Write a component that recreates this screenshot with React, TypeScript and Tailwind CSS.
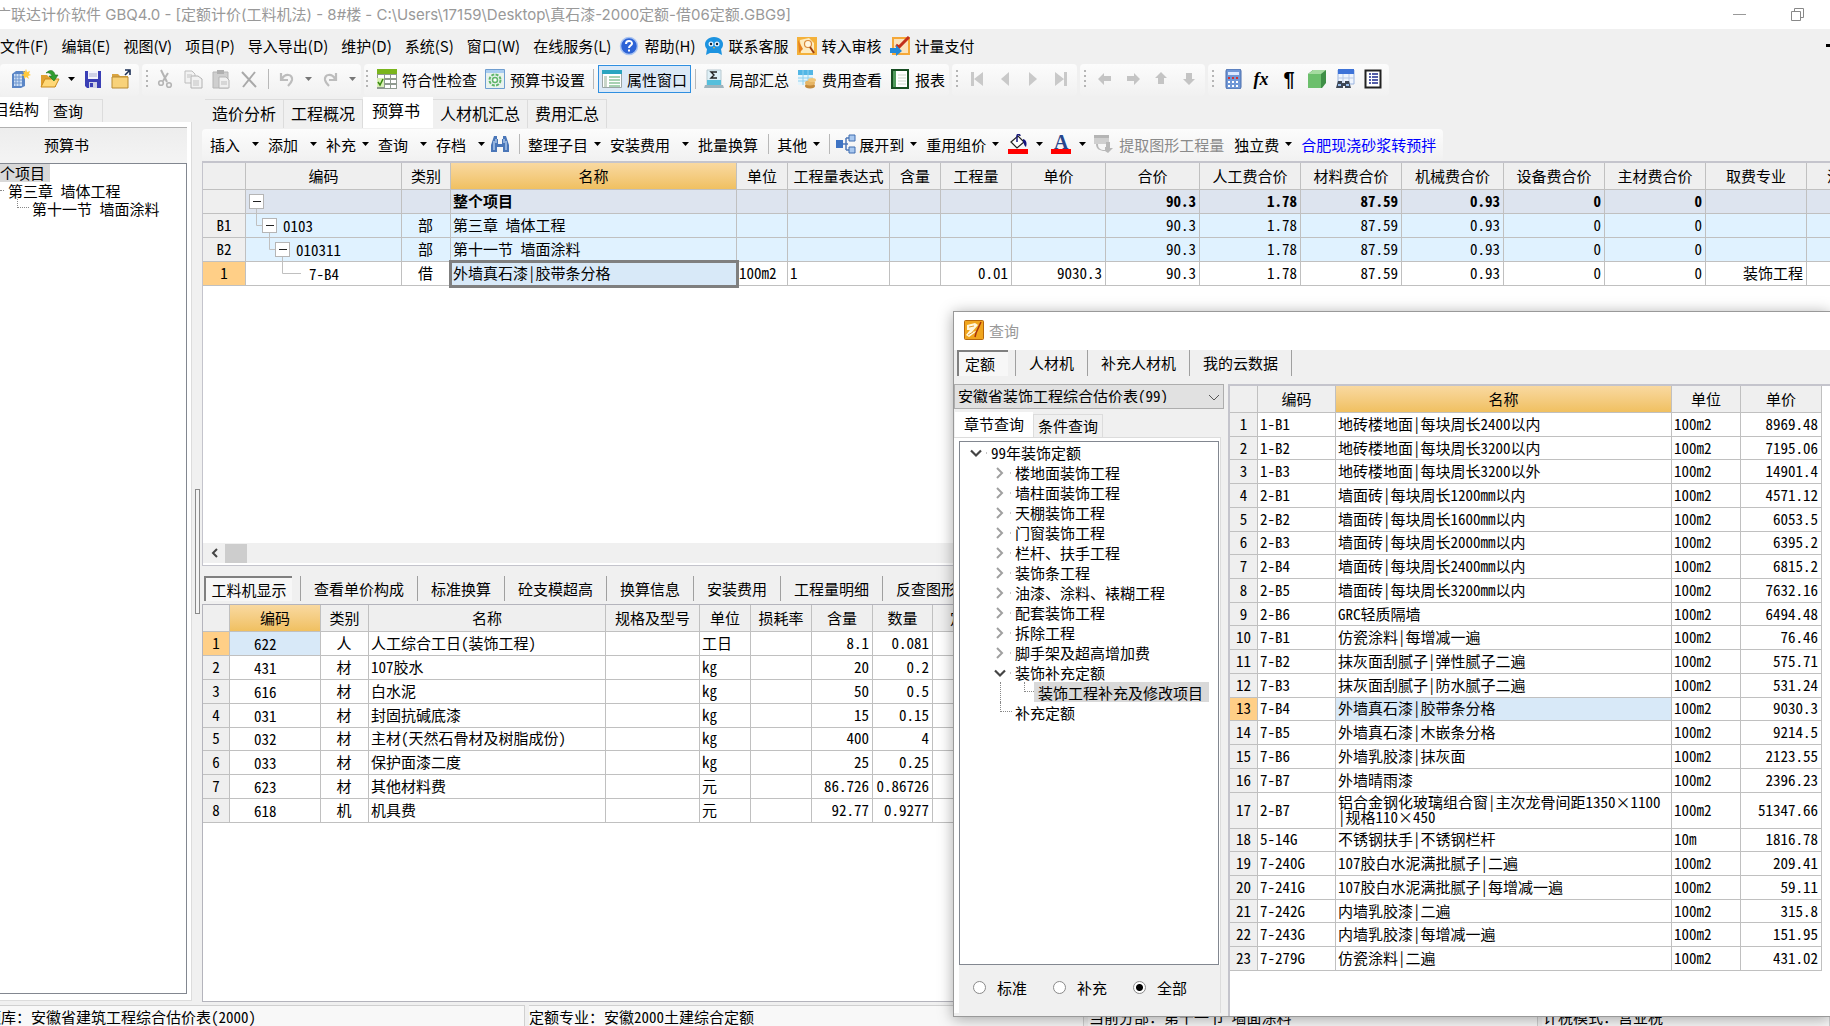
import React, { useState } from 'react';
import clsx from 'clsx';

type IconProps = { children: React.ReactNode; size?: number };

const Svg: React.FC<IconProps> = ({ children, size = 20 }) => (
  <svg width={size} height={size} viewBox="0 0 20 20" fill="none" className="shrink-0" aria-hidden="true">
    {children}
  </svg>
);

const icons = {
  newDoc: (
    <Svg>
      <path d="M1 5l4-3h9v15l-4 2H1z" fill="#5b86c6" />
      <path d="M3 5h8v12H3z" fill="#cfe0f5" />
      <path d="M5 5v12M8 5v12M3 8h8M3 11h8M3 14h8" stroke="#6f97d0" />
      <path d="M15 0l1 3 3-1-1 3 2 1-3 1 1 3-3-2-2 2v-3l-3-1 3-1-1-3 2 1z" fill="#ffc93c" />
    </Svg>
  ),
  open: (
    <Svg>
      <path d="M1 18V6h6l2 2h7v10z" fill="#e0a030" />
      <path d="M1 18l4-8h14l-4 8z" fill="#ffd877" stroke="#c98a1c" />
      <path d="M6 4c4-4 8-3 9 2h3l-4 6-5-5h3c-1-2-3-4-6-3z" fill="#2f9e2f" stroke="#1c6d1c" strokeWidth=".6" />
    </Svg>
  ),
  save: (
    <Svg>
      <path d="M2 2h16v17H4l-2-2z" fill="#3a3fb5" />
      <path d="M5 2h10v8H5z" fill="#f3f4fb" />
      <path d="M6 5h8M6 7h8" stroke="#a9acd0" />
      <path d="M6 13h8v6H6z" fill="#cfd2e6" />
      <path d="M7 14h3v4H7z" fill="#3a3fb5" />
    </Svg>
  ),
  folder: (
    <Svg>
      <path d="M1 5h6l2 2h8v12H1z" fill="#d9a441" />
      <path d="M1 8h16v11H1z" fill="#f8d27a" stroke="#b98a30" />
      <path d="M14 6l4-4M14 1h5v5" stroke="#1b2f55" strokeWidth="1.6" />
    </Svg>
  ),
  cut: (
    <Svg>
      <path d="M6 1l6 12M13 4L8 12" stroke="#b5b5b5" strokeWidth="2" />
      <circle cx="6" cy="14" r="2.3" stroke="#b5b5b5" strokeWidth="1.6" />
      <circle cx="14" cy="16" r="2.3" stroke="#b5b5b5" strokeWidth="1.6" />
    </Svg>
  ),
  copy: (
    <Svg>
      <path d="M2 2h7l3 3v9H2z" fill="#f2f2f2" stroke="#bdbdbd" />
      <path d="M8 7h7l4 3v9H8z" fill="#f2f2f2" stroke="#b2b2b2" />
      <path d="M4 6h5M4 8h3M10 12h6M10 14h6M10 16h6" stroke="#c2c2c2" />
    </Svg>
  ),
  paste: (
    <Svg>
      <path d="M2 3h15v16H2z" fill="#cfcfcf" stroke="#b5b5b5" />
      <path d="M6 1h7v4H6z" fill="#b0b0b0" />
      <path d="M8 8h7l3 3v8H8z" fill="#f0f0f0" stroke="#b5b5b5" />
      <path d="M10 13h6M10 15h6" stroke="#bdbdbd" />
    </Svg>
  ),
  remove: (
    <Svg>
      <path d="M3 3l14 15M16 3L4 18" stroke="#a9a9a9" strokeWidth="2" />
    </Svg>
  ),
  undo: (
    <Svg>
      <path d="M4 4v7h7M5 10c3-6 11-5 10 1-.4 2-2 4-4 6" stroke="#bdbdbd" strokeWidth="2.2" />
    </Svg>
  ),
  redo: (
    <Svg>
      <path d="M16 4v7H9M15 10C12 4 4 5 5 11c.4 2 2 4 4 6" stroke="#bdbdbd" strokeWidth="2.2" />
    </Svg>
  ),
  check: (
    <Svg>
      <path d="M0 0h20v20H0z" fill="#8f9a8f" />
      <path d="M0 0h20v5H0z" fill="#7ab51d" />
      <path d="M1 6h6v4H1zM8 6h5v3H8zM14 6h5v3h-5zM8 11h5v3H8zM14 11h5v3h-5zM8 16h5v3H8zM14 16h5v3h-5z" fill="#fff" />
      <path d="M0 9h7v9H0z" fill="#d8f0b5" />
      <path d="M1 13l2 3 3-6" stroke="#3a8a10" strokeWidth="1.6" />
    </Svg>
  ),
  gear: (
    <Svg>
      <path d="M.5.5h19v19H.5z" fill="#e9f3ee" stroke="#6f9ed0" />
      <path d="M1 1h18v3H1z" fill="#a9cdf0" />
      <circle cx="10" cy="11" r="5.5" stroke="#5fb56a" strokeWidth="2" strokeDasharray="3 1.3" />
      <circle cx="10" cy="11" r="2.5" fill="#fff" stroke="#5fb56a" strokeWidth="1.5" />
    </Svg>
  ),
  windowProps: (
    <Svg>
      <path d="M.5 1.5h19v17H.5z" fill="#fff" stroke="#9aa5a5" />
      <path d="M0 1h20v4H0z" fill="#2aa5c0" />
      <path d="M2 7h3v11H2z" fill="#c9d6c9" />
      <path d="M7 8h11M7 11h11M7 14h11M7 17h11" stroke="#8cc39a" strokeWidth="1.4" />
    </Svg>
  ),
  sum: (
    <Svg>
      <path d="M3 1h14v15H3z" fill="#dff0f7" stroke="#b8c9d0" />
      <path d="M3 11h14v5H3z" fill="#55bfdc" />
      <path d="M1 16h18l1 3H0z" fill="#9fb4bd" />
      <path d="M13 3H7l3 3-3 3h6" stroke="#222" strokeWidth="1.4" />
    </Svg>
  ),
  fee: (
    <Svg>
      <path d="M1 1h15v15H1z" fill="#e5f5fc" />
      <path d="M1 1h15v5H1z" fill="#52b6e5" />
      <path d="M1 9h15M1 12h15M6 1v15M11 1v15" stroke="#8fd0ee" />
      <ellipse cx="13" cy="17" rx="5" ry="2.4" fill="#c48a3a" />
      <ellipse cx="13" cy="14" rx="5" ry="2.4" fill="#e6b565" />
      <ellipse cx="15" cy="11" rx="4" ry="2" fill="#f0c77c" />
    </Svg>
  ),
  report: (
    <Svg>
      <path d="M2 1h16v18H2z" fill="#fff" stroke="#174d22" strokeWidth="2" />
      <path d="M3 2h3v16H3z" fill="#4f9a5b" />
      <path d="M8 6h8M8 9h8M8 12h8M8 15h8" stroke="#cbd8cb" />
    </Svg>
  ),
  first: <Svg><path d="M4 3h3v14H4zM16 3v14L7 10z" fill="#c9c9c9" /></Svg>,
  prev: <Svg><path d="M14 3v14L6 10z" fill="#c9c9c9" /></Svg>,
  next: <Svg><path d="M6 3v14l8-7z" fill="#c9c9c9" /></Svg>,
  last: <Svg><path d="M13 3h3v14h-3zM4 3v14l9-7z" fill="#c9c9c9" /></Svg>,
  left: <Svg><path d="M3 10l6-6v3h7v5H9v4z" fill="#c4c4c4" /></Svg>,
  right: <Svg><path d="M17 10l-6-6v3H4v5h7v4z" fill="#c4c4c4" /></Svg>,
  up: <Svg><path d="M10 3l6 6h-3v6H7V9H4z" fill="#c4c4c4" /></Svg>,
  down: <Svg><path d="M10 16l6-6h-3V4H7v6H4z" fill="#c4c4c4" /></Svg>,
  calc: (
    <Svg>
      <rect x="3" y="0" width="15" height="20" rx="2" fill="#6f97d6" stroke="#4a6cab" />
      <path d="M5 3h11v3H5z" fill="#dbe9ff" />
      <path d="M5 9h2M9 9h2M13 9h2" stroke="#d03030" strokeWidth="2" />
      <path d="M5 13h2M9 13h2M13 13h2M5 17h2M9 17h2M13 17h2" stroke="#fff" strokeWidth="2" />
    </Svg>
  ),
  cube: (
    <Svg>
      <path d="M1 5l5-4h13v13l-4 5H1z" fill="#3f8f46" />
      <path d="M1 5h13v14H1z" fill="#6cbf6c" />
      <path d="M1 5l5-4h13l-5 4z" fill="#a5dba0" />
    </Svg>
  ),
  findTable: (
    <Svg>
      <path d="M3 1h16v14H3z" fill="#eef4fd" stroke="#9bb5e0" />
      <path d="M3 0h16v5H3z" fill="#3e73d8" />
      <path d="M8 5v9M14 5v9M3 9h16" stroke="#b9c9e6" />
      <path d="M3 12h4v2h3v-2h4l2 7h-6v-2H8v2H1z" fill="#3d4654" />
      <path d="M3 16h3M11 16h3" stroke="#9cc0ee" strokeWidth="2" />
    </Svg>
  ),
  list: (
    <Svg>
      <path d="M2.5 1.5h15v17h-15z" fill="#fff" stroke="#222" strokeWidth="2" />
      <path d="M6 5h2M6 8h2M6 11h2M6 14h2M9 5h6M9 8h6M9 11h6M9 14h6" stroke="#1c2a8c" strokeWidth="1.7" />
    </Svg>
  ),
  help: (
    <Svg>
      <circle cx="10" cy="10" r="8.5" fill="#2c63d6" stroke="#a9c4f2" strokeWidth="1.5" />
      <path d="M7 8c0-4 6-4 6-.5 0 2-3 2.2-3 4.5M10 13.500v2" stroke="#fff" strokeWidth="2" />
    </Svg>
  ),
  service: (
    <Svg>
      <path d="M10 1c6 0 9 4 9 7s-1 4-2 5l1 6-4-2H6l-4 2 1-6C2 12 1 11 1 8s3-7 9-7z" fill="#1c93e0" />
      <circle cx="7" cy="8" r="2.500" fill="#e6f5ff" />
      <circle cx="13" cy="8" r="2.500" fill="#e6f5ff" />
      <circle cx="7" cy="8" r="1.200" fill="#123" />
      <circle cx="13" cy="8" r="1.200" fill="#123" />
      <path d="M9 11h2l-1 2z" fill="#f4b13a" />
    </Svg>
  ),
  audit: (
    <Svg>
      <path d="M0 1h20v18H0z" fill="#f4b13a" />
      <path d="M3 4l9-2 5 5v10H4z" fill="#fdebc0" />
      <circle cx="11" cy="8" r="3.500" fill="#fff6e0" stroke="#d98a3a" strokeWidth="1.200" />
      <path d="M13 11l4 6" stroke="#9c3f10" strokeWidth="2" />
      <path d="M1 4l5 9-4 4z" fill="#e5801f" />
    </Svg>
  ),
  payment: (
    <Svg>
      <path d="M2 1h18v18H2z" fill="#f5a838" />
      <path d="M4 3h14v14H4z" fill="#fbe3bc" />
      <path d="M19 1L9 11l-3-2" stroke="#c22f1c" strokeWidth="3" />
      <path d="M0 12h6V9l6 6-6 5v-3H0z" fill="#2389d8" />
    </Svg>
  ),
  binoculars: (
    <Svg>
      <path d="M4 2h3v3h1v5h4V5h1V2h3l3 9v7h-6v-5H7v5H1v-7z" fill="#4a76b8" />
      <path d="M4 7v9M16 7v9M6 5v4M14 5v4" stroke="#b8d2f2" strokeWidth="1.300" />
    </Svg>
  ),
  expand: (
    <Svg>
      <path d="M7 10h5M10 4v12M10 4h4M10 16h4" stroke="#4f78b8" strokeWidth="1.500" />
      <path d="M0 6h7v8H0z" fill="#3f74c4" />
      <path d="M13 1h6v6h-6zM13 13h6v6h-6z" fill="#a9c8ef" stroke="#3f6cb0" />
    </Svg>
  ),
  bucket: (
    <Svg>
      <path d="M3 8l7-6 6 6-7 6z" fill="#fff" stroke="#222" strokeWidth="1.200" />
      <path d="M9 8V2c0-2 3-2 3 0" stroke="#1a1a7a" strokeWidth="1.500" />
      <path d="M15 5c4 1 4 5 3 8-2-1-2-4-3-5z" fill="#16167e" />
      <path d="M0 15h20v5H0z" fill="#f00" />
    </Svg>
  ),
  extract: (
    <Svg>
      <path d="M0 1h15v9H0z" fill="#cfcfcf" />
      <path d="M0 1h15v3H0z" fill="#b5b5b5" />
      <path d="M4 10c0 4 2 6 7 6v-3h1V8h4v6h3l-5 5-3-2c-5 0-9-2-9-7z" fill="#b8b8b8" />
    </Svg>
  ),
  logo: (
    <Svg>
      <rect x=".5" y=".5" width="19" height="19" rx="1" fill="#f0a51e" stroke="#b5670c" />
      <path d="M3 5l8-2 3 2-6 7 5-1-8 6-3-2 4-5H3z" fill="#fff6dc" />
      <path d="M5 7l5-1M4 15l5-3" stroke="#e09a30" />
      <path d="M17 2l-5 11-1 4" stroke="#a8320c" strokeWidth="1.500" />
    </Svg>
  ),
};

const Arrow: React.FC<{ muted?: boolean }> = ({ muted }) => (
  <svg width="7" height="4" viewBox="0 0 7 4" className="shrink-0" aria-hidden="true">
    <path d="M0 0h7L3.500 4z" fill={muted ? '#777' : '#000'} />
  </svg>
);

const Grip = () => (
  <svg width="4" height="20" viewBox="0 0 4 20" className="shrink-0" aria-hidden="true">
    <path d="M1 1h2v2H1zM1 6h2v2H1zM1 11h2v2H1zM1 16h2v2H1z" fill="#b5b5b5" />
  </svg>
);

const Sep = () => <span className="h-5 w-px shrink-0 bg-[#b8b8b8]" />;

const Strip: React.FC<{ children: React.ReactNode; className?: string }> = ({ children, className }) => (
  <div className={clsx('flex h-8 shrink-0 items-center rounded-sm bg-linear-to-b from-[#fcfcfc] to-[#f1f1f1] pb-[2px]', className)}>
    {children}
  </div>
);

const IconButton: React.FC<{ label: string; icon: React.ReactNode; className?: string }> = ({ label, icon, className }) => (
  <button type="button" aria-label={label} className={clsx('flex shrink-0 items-center', className)}>
    {icon}
  </button>
);

const ToolButton: React.FC<{ text: string; icon: React.ReactNode; active?: boolean }> = ({ text, icon, active }) => (
  <button
    type="button"
    className={clsx(
      'flex shrink-0 items-center gap-[5px]',
      active && 'h-7 border border-[#2f8fe0] bg-[#dce9f7] px-[3px]'
    )}
  >
    {icon}
    {text}
  </button>
);

/* split buttons keep their arrow in a wider slot than plain menus */
const MenuButton: React.FC<{ text: string; split?: boolean; icon?: React.ReactNode }> = ({ text, split, icon }) => (
  <button type="button" className="flex shrink-0 items-center pr-[9px]">
    {icon && <span className="mr-[3px]">{icon}</span>}
    <span className={split ? 'mr-3' : 'mr-[6px]'}>{text}</span>
    <Arrow />
  </button>
);

const menus = ['文件(F)', '编辑(E)', '视图(V)', '项目(P)', '导入导出(D)', '维护(D)', '系统(S)', '窗口(W)', '在线服务(L)'];

const mainTabs = ['造价分析', '工程概况', '预算书', '人材机汇总', '费用汇总'];

const budgetHead = [
  '', '编码', '类别', '名称', '单位', '工程量表达式', '含量', '工程量', '单价', '合价',
  '人工费合价', '材料费合价', '机械费合价', '设备费合价', '主材费合价', '取费专业', '汇总类别',
];

const budgetRows = [
  { no: '', level: 0, code: '', kind: '', name: '整个项目', unit: '', expr: '', qty: '', price: '', major: '' },
  { no: 'B1', level: 1, code: '0103', kind: '部', name: '第三章 墙体工程', unit: '', expr: '', qty: '', price: '', major: '' },
  { no: 'B2', level: 2, code: '010311', kind: '部', name: '第十一节 墙面涂料', unit: '', expr: '', qty: '', price: '', major: '' },
  { no: '1', level: 3, code: '7-B4', kind: '借', name: '外墙真石漆|胶带条分格', unit: '100m2', expr: '1', qty: '0.01', price: '9030.3', major: '装饰工程' },
];

const totals = ['90.3', '1.78', '87.59', '0.93', '0', '0'];

const detailTabs = ['查看单价构成', '标准换算', '砼支模超高', '换算信息', '安装费用', '工程量明细', '反查图形工程量'];

const detailHead = ['', '编码', '类别', '名称', '规格及型号', '单位', '损耗率', '含量', '数量', '定额价'];

const detailRows = [
  ['622', '人', '人工综合工日(装饰工程)', '工日', '8.1', '0.081'],
  ['431', '材', '107胶水', 'kg', '20', '0.2'],
  ['616', '材', '白水泥', 'kg', '50', '0.5'],
  ['031', '材', '封固抗碱底漆', 'kg', '15', '0.15'],
  ['032', '材', '主材(天然石骨材及树脂成份)', 'kg', '400', '4'],
  ['033', '材', '保护面漆二度', 'kg', '25', '0.25'],
  ['623', '材', '其他材料费', '元', '86.726', '0.86726'],
  ['618', '机', '机具费', '元', '92.77', '0.9277'],
];

const quotaTree = [
  '楼地面装饰工程', '墙柱面装饰工程', '天棚装饰工程', '门窗装饰工程', '栏杆、扶手工程',
  '装饰条工程', '油漆、涂料、裱糊工程', '配套装饰工程', '拆除工程', '脚手架及超高增加费',
];

const quotaRows = [
  ['1-B1', '地砖楼地面|每块周长2400以内', '100m2', '8969.48'],
  ['1-B2', '地砖楼地面|每块周长3200以内', '100m2', '7195.06'],
  ['1-B3', '地砖楼地面|每块周长3200以外', '100m2', '14901.4'],
  ['2-B1', '墙面砖|每块周长1200mm以内', '100m2', '4571.12'],
  ['2-B2', '墙面砖|每块周长1600mm以内', '100m2', '6053.5'],
  ['2-B3', '墙面砖|每块周长2000mm以内', '100m2', '6395.2'],
  ['2-B4', '墙面砖|每块周长2400mm以内', '100m2', '6815.2'],
  ['2-B5', '墙面砖|每块周长3200mm以内', '100m2', '7632.16'],
  ['2-B6', 'GRC轻质隔墙', '100m2', '6494.48'],
  ['7-B1', '仿瓷涂料|每增减一遍', '100m2', '76.46'],
  ['7-B2', '抹灰面刮腻子|弹性腻子二遍', '100m2', '575.71'],
  ['7-B3', '抹灰面刮腻子|防水腻子二遍', '100m2', '531.24'],
  ['7-B4', '外墙真石漆|胶带条分格', '100m2', '9030.3'],
  ['7-B5', '外墙真石漆|木嵌条分格', '100m2', '9214.5'],
  ['7-B6', '外墙乳胶漆|抹灰面', '100m2', '2123.55'],
  ['7-B7', '外墙晴雨漆', '100m2', '2396.23'],
  ['2-B7', '铝合金钢化玻璃组合窗|主次龙骨间距1350×1100\n|规格110×450', '100m2', '51347.66'],
  ['5-14G', '不锈钢扶手|不锈钢栏杆', '10m', '1816.78'],
  ['7-240G', '107胶白水泥满批腻子|二遍', '100m2', '209.41'],
  ['7-241G', '107胶白水泥满批腻子|每增减一遍', '100m2', '59.11'],
  ['7-242G', '内墙乳胶漆|二遍', '100m2', '315.8'],
  ['7-243G', '内墙乳胶漆|每增减一遍', '100m2', '151.95'],
  ['7-279G', '仿瓷涂料|二遍', '100m2', '431.02'],
];

const Th: React.FC<{ children?: React.ReactNode; hot?: boolean }> = ({ children, hot }) => (
  <th
    scope="col"
    className={clsx(
      'h-[27px] overflow-hidden border-r border-b border-[#c0c0c0] p-0 pb-[2px] font-normal whitespace-nowrap',
      hot ? 'bg-linear-to-b from-[#f9d9a0] to-[#f0c060]' : 'bg-[#efefef]'
    )}
  >
    {children}
  </th>
);

const cell = 'border-r border-b border-[#c0c0c0] pt-0 pr-[3px] pb-[2px] pl-[2px]';
const rowHead = 'border-r border-b border-[#c0c0c0] p-0 pb-[2px] text-center font-normal';

/* connector lines and the collapse box of one row in the code column */
const CodeCell: React.FC<{ level: number; code: string }> = ({ level, code }) => {
  const x = 10 + level * 13;
  const px = x - 13;
  return (
    <div className="flex h-[23px] items-center">
      <svg width={x + 14} height="23" className="shrink-0" aria-hidden="true" fill="none">
        {level > 0 && <path d={`M${px}.5 0V11.500H${level === 3 ? x + 6 : x}`} stroke="#c0c0c0" />}
        {level < 3 && (
          <>
            <path d={`M${x}.5 18V23`} stroke="#c0c0c0" />
            <rect x={x - 6.500} y="4.500" width="14" height="14" fill="#fff" stroke="#b5b5b5" />
            <path d={`M${x - 3} 11.500h8`} stroke="#222" />
          </>
        )}
      </svg>
      <span>{code}</span>
    </div>
  );
};

const Twist: React.FC<{ open?: boolean }> = ({ open }) => (
  <svg width="21" height="20" viewBox="0 0 21 20" fill="none" className="shrink-0" aria-hidden="true">
    {open ? (
      <path d="M1 8.500l5 5 5-5" stroke="#444" strokeWidth="2.200" />
    ) : (
      <path d="M3 6l5 5-5 5" stroke="#a0a0a0" strokeWidth="2" />
    )}
    <path d="M16 11h1" stroke="#888" />
  </svg>
);

export default function App() {
  const [tab, setTab] = useState('预算书');
  const [scope, setScope] = useState('全部');

  return (
    <div className="relative flex h-screen w-full flex-col overflow-hidden bg-[#f0f0f0] font-['Noto_Sans_Mono_CJK_SC','Noto_Sans_CJK_SC',sans-serif] text-[15px] leading-[15px] whitespace-nowrap text-black">
      {/* title bar */}
      <header className="flex h-[29px] shrink-0 items-center justify-between bg-white font-['Inter','Noto_Sans_CJK_SC',sans-serif] text-[#999]">
        <h1 className="-ml-1">广联达计价软件 GBQ4.0 - [定额计价(工料机法) - 8#楼 - C:\Users\17159\Desktop\真石漆-2000定额-借06定额.GBG9]</h1>
        <div className="flex items-center gap-[45px] pr-[26px]">
          <IconButton
            label="最小化"
            icon={<svg width="13" height="13" fill="none"><path d="M0 6.500h13" stroke="#999" /></svg>}
          />
          <IconButton
            label="还原"
            icon={<svg width="13" height="13" fill="none"><path d="M.5 3.500h9v9h-9zM3.500 3V.5h9v9H10" stroke="#888" /></svg>}
          />
        </div>
      </header>

      {/* menu bar */}
      <nav className="flex h-[35px] shrink-0 items-center pb-[2px] font-['Noto_Sans_CJK_SC',sans-serif]">
        <div className="flex gap-[13px]">
          {menus.map((m) => <button type="button" key={m}>{m}</button>)}
        </div>
        <div className="ml-2 flex gap-2">
          <ToolButton icon={icons.help} text="帮助(H)" />
          <ToolButton icon={icons.service} text="联系客服" />
          <ToolButton icon={icons.audit} text="转入审核" />
          <ToolButton icon={icons.payment} text="计量支付" />
        </div>
        <span className="ml-auto h-[3px] w-1 bg-black" />
      </nav>

      {/* main toolbar */}
      <div className="flex h-[33px] shrink-0 gap-[3px] font-['Noto_Sans_CJK_SC',sans-serif]">
        <Strip className="w-[139px] pl-[11px]">
          <IconButton label="新建" icon={icons.newDoc} />
          <IconButton label="打开" icon={icons.open} className="ml-[9px]" />
          <IconButton label="最近文件" icon={<Arrow />} className="ml-2" />
          <IconButton label="保存" icon={icons.save} className="ml-2" />
          <IconButton label="目录" icon={icons.folder} className="ml-2" />
        </Strip>
        <Strip className="w-[219px] pl-[3px]">
          <Grip />
          <IconButton label="剪切" icon={icons.cut} className="ml-[6px]" />
          <IconButton label="复制" icon={icons.copy} className="ml-2" />
          <IconButton label="粘贴" icon={icons.paste} className="ml-2" />
          <IconButton label="删除" icon={icons.remove} className="mr-[9px] ml-2" />
          <Sep />
          <IconButton label="撤消" icon={icons.undo} className="ml-2" />
          <IconButton label="撤消列表" icon={<Arrow muted />} className="ml-2" />
          <IconButton label="恢复" icon={icons.redo} className="ml-2" />
          <IconButton label="恢复列表" icon={<Arrow muted />} className="ml-[9px]" />
        </Strip>
        <Strip className="gap-2 pr-1 pl-px">
          <Grip />
          <ToolButton icon={icons.check} text="符合性检查" />
          <ToolButton icon={icons.gear} text="预算书设置" />
          <Sep />
          <div className="-mx-1"><ToolButton icon={icons.windowProps} text="属性窗口" active /></div>
          <Sep />
          <ToolButton icon={icons.sum} text="局部汇总" />
          <ToolButton icon={icons.fee} text="费用查看" />
          <ToolButton icon={icons.report} text="报表" />
        </Strip>
        <Strip className="w-[125px] gap-2 pl-[3px]">
          <Grip />
          <IconButton label="首行" icon={icons.first} />
          <IconButton label="上一行" icon={icons.prev} />
          <IconButton label="下一行" icon={icons.next} />
          <IconButton label="末行" icon={icons.last} />
        </Strip>
        <Strip className="w-[125px] gap-2 pl-[3px]">
          <Grip />
          <IconButton label="升级" icon={icons.left} />
          <IconButton label="降级" icon={icons.right} />
          <IconButton label="上移" icon={icons.up} />
          <IconButton label="下移" icon={icons.down} />
        </Strip>
        <Strip className="gap-2 pr-[6px] pl-[3px]">
          <Grip />
          <IconButton label="计算器" icon={icons.calc} />
          <button type="button" className="w-5 font-['Liberation_Serif',serif] text-lg font-bold italic">fx</button>
          <button type="button" className="w-5 font-['Liberation_Sans',sans-serif] text-xl font-bold">¶</button>
          <IconButton label="图元" icon={icons.cube} />
          <IconButton label="查找" icon={icons.findTable} />
          <IconButton label="清单" icon={icons.list} />
        </Strip>
      </div>

      <div className="flex min-h-0 flex-1">
        {/* project structure */}
        <aside className="flex w-[192px] shrink-0 flex-col pb-1">
          <div className="flex h-[25px] items-end font-['Noto_Sans_CJK_SC',sans-serif]">
            <button type="button" className="flex h-[25px] w-12 items-center justify-end bg-white pr-[9px] pb-[2px]">项目结构</button>
            <button type="button" className="h-[23px] w-[55px] border border-b-0 border-[#dcdcdc] pr-[19px] pb-[2px] pl-1">查询</button>
          </div>
          <div className="flex min-h-0 flex-1 flex-col border-r border-b border-[#dcdcdc] bg-white pt-[5px] pr-1 pb-[6px]">
            <div className="flex h-9 shrink-0 items-center justify-center border-t border-[#b0b0b0] bg-linear-to-b from-[#ededed] to-[#f4f4f4] pr-[54px] pb-[2px] font-['Noto_Sans_CJK_SC',sans-serif]">
              预算书
            </div>
            <ul className="flex-1 border-y border-r border-[#828790]">
              <li className="flex h-[18px] w-[50px] items-center justify-end bg-[#d9d9d9] pr-[5px] pb-[2px]">整个项目</li>
              <li className="flex h-[18px] items-center gap-1 pb-[2px]">
                <span className="w-1 border-b border-dotted border-[#888]" />
                第三章 墙体工程
              </li>
              <li className="flex h-[18px] items-center gap-[3px] pb-[2px] pl-[17px]">
                <span className="-mt-[9px] h-[9px] w-3 border-b border-l border-dotted border-[#888]" />
                第十一节 墙面涂料
              </li>
            </ul>
          </div>
        </aside>

        <div className="flex w-[10px] shrink-0 items-center justify-end pr-[2px]">
          <span className="h-[125px] w-[5px] border border-[#8a8a8a] bg-[#f4f4f4]" />
        </div>

        <main className="flex min-w-0 flex-1 flex-col pb-[3px]">
          <div className="flex h-8 shrink-0 items-end text-base">
            <div className="flex items-end pb-px pl-[3px]">
              {mainTabs.map((t) => (
                <button
                  type="button"
                  key={t}
                  onClick={() => setTab(t)}
                  className={clsx(
                    t === tab
                      ? 'h-[31px] bg-white pr-[13px] pb-[6px] pl-[9px]'
                      : 'h-[29px] border-t border-r border-[#dcdcdc] px-[7px] pb-[2px]'
                  )}
                >
                  {t}
                </button>
              ))}
            </div>
          </div>

          <div className="flex h-8 shrink-0 font-['Noto_Sans_CJK_SC',sans-serif]">
            <Strip className="pr-[7px] pl-2">
              <MenuButton text="插入" split />
              <MenuButton text="添加" split />
              <MenuButton text="补充" />
              <MenuButton text="查询" split />
              <MenuButton text="存档" split />
              <IconButton label="查找" icon={icons.binoculars} className="-ml-1 mr-[9px]" />
              <Sep />
              <span className="w-2" />
              <MenuButton text="整理子目" />
              <MenuButton text="安装费用" split />
              <button type="button" className="mr-[10px]">批量换算</button>
              <Sep />
              <span className="w-2" />
              <MenuButton text="其他" />
              <Sep />
              <span className="w-[6px]" />
              <MenuButton text="展开到" icon={icons.expand} />
              <MenuButton text="重用组价" />
              <IconButton label="填充颜色" icon={icons.bucket} />
              <IconButton label="填充颜色列表" icon={<Arrow />} className="mx-2" />
              <button
                type="button"
                className="h-5 w-5 border-b-[5px] border-[#f00] font-['Liberation_Serif',serif] text-xl leading-[14px] font-bold text-[#28458c]"
              >
                A
              </button>
              <IconButton label="文字颜色列表" icon={<Arrow />} className="mx-2" />
              <button type="button" disabled className="mr-[10px] flex items-center gap-[5px] text-[#8a8a8a]">
                {icons.extract}
                提取图形工程量
              </button>
              <MenuButton text="独立费" />
              <a href="#mortar" className="text-[#0000ff]">合肥现浇砂浆转预拌</a>
            </Strip>
          </div>

          {/* budget sheet */}
          <section className="flex shrink-0 basis-[405px] flex-col border-t-2 border-b border-l border-[#c4c4cc] bg-white">
            <div className="min-h-0 flex-1 overflow-hidden">
              <table className="h-[122px] w-[1705px] table-fixed border-separate border-spacing-0">
                <colgroup>
                  <col className="w-[43px]" />
                  <col className="w-[156px]" />
                  <col className="w-[49px]" />
                  <col className="w-[286px]" />
                  <col className="w-[51px]" />
                  <col className="w-[102px]" />
                  <col className="w-[51px]" />
                  <col className="w-[71px]" />
                  <col className="w-[94px]" />
                  <col className="w-[94px]" />
                  <col className="w-[101px]" />
                  <col className="w-[101px]" />
                  <col className="w-[102px]" />
                  <col className="w-[101px]" />
                  <col className="w-[101px]" />
                  <col className="w-[101px]" />
                  <col className="w-[101px]" />
                </colgroup>
                <thead>
                  <tr>
                    {budgetHead.map((h, i) => <Th key={i} hot={h === '名称'}>{h}</Th>)}
                  </tr>
                </thead>
                <tbody>
                  {budgetRows.map((r) => {
                    const leaf = r.level === 3;
                    return (
                      <tr
                        key={r.level}
                        className={clsx(r.level === 0 && 'bg-[#dde4ef] font-bold', !leaf && r.level > 0 && 'bg-[#e0f2ff]')}
                      >
                        <th scope="row" className={clsx(rowHead, leaf ? 'bg-[#ffcf87]' : 'bg-[#efefef]')}>{r.no}</th>
                        <td className="border-r border-b border-[#c0c0c0] p-0"><CodeCell level={r.level} code={r.code} /></td>
                        <td className={clsx(cell, 'text-center')}>{r.kind}</td>
                        <td className={clsx(cell, leaf && 'bg-[#d8e9f8] outline-3 -outline-offset-1 outline-[#7f7f7f]')}>{r.name}</td>
                        <td className={cell}>{r.unit}</td>
                        <td className={cell}>{r.expr}</td>
                        <td className={cell} />
                        <td className={clsx(cell, 'text-right')}>{r.qty}</td>
                        <td className={clsx(cell, 'text-right')}>{r.price}</td>
                        {totals.map((v, i) => <td key={i} className={clsx(cell, 'text-right')}>{v}</td>)}
                        <td className={clsx(cell, 'text-right')}>{r.major}</td>
                        <td className={cell} />
                      </tr>
                    );
                  })}
                </tbody>
              </table>
            </div>
            <div className="mb-[2px] flex h-5 shrink-0 items-center bg-[#f0f0f0] pl-2">
              <svg width="7" height="10" fill="none" aria-hidden="true"><path d="M6 1L2 5l4 4" stroke="#444" strokeWidth="2" /></svg>
              <span className="ml-[7px] h-[19px] w-[22px] bg-[#cdcdcd]" />
            </div>
          </section>

          <div className="flex h-[38px] shrink-0 items-end overflow-hidden pb-[3px] pl-[2px]">
            <button type="button" className="mr-2 h-[25px] w-[88px] shrink-0 border-t-2 border-l-2 border-[#808080] bg-[#f7f7f7] pb-px">
              工料机显示
            </button>
            {detailTabs.map((t) => (
              <button type="button" key={t} className="h-[25px] shrink-0 border-l border-[#a0a0a0] px-[13px] pb-px">{t}</button>
            ))}
          </div>

          <section className="min-h-0 flex-1 overflow-hidden border border-r-0 border-[#b4b4bc] bg-white">
            <table className="h-[218px] w-[810px] table-fixed border-separate border-spacing-0">
              <colgroup>
                <col className="w-[27px]" />
                <col className="w-[91px]" />
                <col className="w-[48px]" />
                <col className="w-[237px]" />
                <col className="w-[94px]" />
                <col className="w-[51px]" />
                <col className="w-[61px]" />
                <col className="w-[61px]" />
                <col className="w-[60px]" />
                <col className="w-[80px]" />
              </colgroup>
              <thead>
                <tr>
                  {detailHead.map((h, i) => <Th key={i} hot={h === '编码'}>{h}</Th>)}
                </tr>
              </thead>
              <tbody>
                {detailRows.map(([code, kind, name, unit, rate, qty], i) => (
                  <tr key={code}>
                    <th scope="row" className={clsx(rowHead, i === 0 ? 'bg-[#ffcf87]' : 'bg-[#efefef]')}>{i + 1}</th>
                    <td className={clsx('border-r border-b border-[#c0c0c0] p-0 pl-6', i === 0 && 'bg-[#d8e9f8]')}>{code}</td>
                    <td className={clsx(cell, 'text-center')}>{kind}</td>
                    <td className={cell}>{name}</td>
                    <td className={cell} />
                    <td className={cell}>{unit}</td>
                    <td className={cell} />
                    <td className={clsx(cell, 'text-right')}>{rate}</td>
                    <td className={clsx(cell, 'text-right')}>{qty}</td>
                    <td className={cell} />
                  </tr>
                ))}
              </tbody>
            </table>
          </section>
        </main>
      </div>

      {/* status bar */}
      <footer className="flex h-[21px] shrink-0 gap-1 *:h-full *:border-t *:border-r *:border-[#d0d0d0] *:bg-[#f8f8f8] *:pt-[3px]">
        <div className="w-[525px] overflow-hidden"><p className="-ml-[29px]">定额库：安徽省建筑工程综合估价表(2000)</p></div>
        <div className="w-[555px]">定额专业：安徽2000土建综合定额</div>
        <div className="w-[450px] pl-px">当前分部：第十一节 墙面涂料</div>
        <div className="flex-1 pl-px">计税模式：营业税</div>
      </footer>

      {/* query window */}
      <div
        role="dialog"
        aria-labelledby="query-title"
        className="absolute top-[311px] right-0 bottom-[9px] left-[953px] flex flex-col border border-r-0 border-[#999] bg-[#f0f0f0] shadow-[0_2px_14px_rgba(0,0,0,0.35)]"
      >
        <div className="flex h-[38px] shrink-0 items-center gap-[5px] bg-white pb-[2px] pl-[10px] font-['Noto_Sans_CJK_SC',sans-serif] text-[#999]">
          {icons.logo}
          <h2 id="query-title">查询</h2>
        </div>
        <div className="flex h-[34px] shrink-0 items-start pl-[3px]">
          <button type="button" className="mr-[7px] h-[26px] w-[51px] border-t-2 border-l-2 border-[#808080] bg-[#f7f7f7] pr-[7px] pb-[2px]">定额</button>
          {['人材机', '补充人材机', '我的云数据'].map((t) => (
            <button type="button" key={t} className="h-[26px] border-l border-[#a0a0a0] px-[13px] pb-[2px]">{t}</button>
          ))}
          <span className="h-[26px] border-l border-[#a0a0a0]" />
        </div>
        <div className="flex min-h-0 flex-1">
          <div className="flex w-[270px] shrink-0 flex-col">
            <div className="relative h-[25px] shrink-0">
              <select aria-label="定额库" className="h-full w-full appearance-none border border-[#adadad] bg-[#e1e1e1] pb-[2px] pl-[3px]">
                <option>安徽省装饰工程综合估价表(99)</option>
              </select>
              <svg width="12" height="7" fill="none" className="pointer-events-none absolute top-[10px] right-1" aria-hidden="true">
                <path d="M1 1l5 5 5-5" stroke="#555" />
              </svg>
            </div>
            <div className="mt-[3px] flex h-[25px] shrink-0 items-end pl-px">
              <button type="button" className="h-[25px] w-[78px] bg-white pb-[3px]">章节查询</button>
              <button type="button" className="h-[23px] w-[70px] border border-b-0 border-[#dcdcdc] pb-[2px]">条件查询</button>
            </div>
            <div className="mr-[3px] mb-[3px] flex min-h-0 flex-1 flex-col border-t border-r border-[#dcdcdc] bg-white pt-[3px] pl-[5px]">
              <ul className="mr-px flex-1 border border-[#828790] *:flex *:h-5 *:items-center">
                <li className="pl-[10px]"><Twist open />99年装饰定额</li>
                {quotaTree.map((t) => (
                  <li key={t} className="pl-[34px]"><Twist />{t}</li>
                ))}
                <li className="pl-[34px]"><Twist open />装饰补充定额</li>
                <li className="pl-10">
                  <span className="h-5 w-6 border-l border-dotted border-[#888]" />
                  <span className="mb-[10px] h-[10px] w-[10px] border-b border-l border-dotted border-[#888]" />
                  <span className="flex h-5 items-center bg-[#d9d9d9] pr-[6px] pl-1">装饰工程补充及修改项目</span>
                </li>
                <li className="pl-10">
                  <span className="mr-[3px] mb-[10px] h-[10px] w-3 border-b border-l border-dotted border-[#888]" />
                  补充定额
                </li>
              </ul>
              <div className="flex h-[48px] shrink-0 items-center gap-[26px] bg-[#f0f0f0] pb-1 pl-[14px]">
                {['标准', '补充', '全部'].map((s) => (
                  <label key={s} className="flex items-center gap-[11px]">
                    <input
                      type="radio"
                      name="scope"
                      checked={scope === s}
                      onChange={() => setScope(s)}
                      className="h-[13px] w-[13px] appearance-none rounded-full border border-[#8a8a8a] bg-white checked:bg-[radial-gradient(circle,#000_3px,#fff_4px)]"
                    />
                    {s}
                  </label>
                ))}
              </div>
            </div>
          </div>
          <div className="ml-1 min-w-0 flex-1 border-t-2 border-l-2 border-[#c4c4cc] bg-white pr-2">
            <table className="h-[585px] w-full table-fixed border-separate border-spacing-0">
              <colgroup>
                <col className="w-[28px]" />
                <col className="w-[78px]" />
                <col />
                <col className="w-[69px]" />
                <col className="w-[81px]" />
              </colgroup>
              <thead>
                <tr>
                  {['', '编码', '名称', '单位', '单价'].map((h) => <Th key={h} hot={h === '名称'}>{h}</Th>)}
                </tr>
              </thead>
              <tbody>
                {quotaRows.map(([code, name, unit, price], i) => (
                  <tr key={code} className={clsx(name.includes('\n') && 'h-9')}>
                    <th scope="row" className={clsx(rowHead, i === 12 ? 'bg-[#ffcf87]' : 'bg-[#efefef]')}>{i + 1}</th>
                    <td className={cell}>{code}</td>
                    <td className={clsx(cell, 'whitespace-pre', i === 12 && 'bg-[#d8e9f8]')}>{name}</td>
                    <td className={cell}>{unit}</td>
                    <td className={clsx(cell, 'text-right')}>{price}</td>
                  </tr>
                ))}
              </tbody>
            </table>
          </div>
        </div>
      </div>
    </div>
  );
}
